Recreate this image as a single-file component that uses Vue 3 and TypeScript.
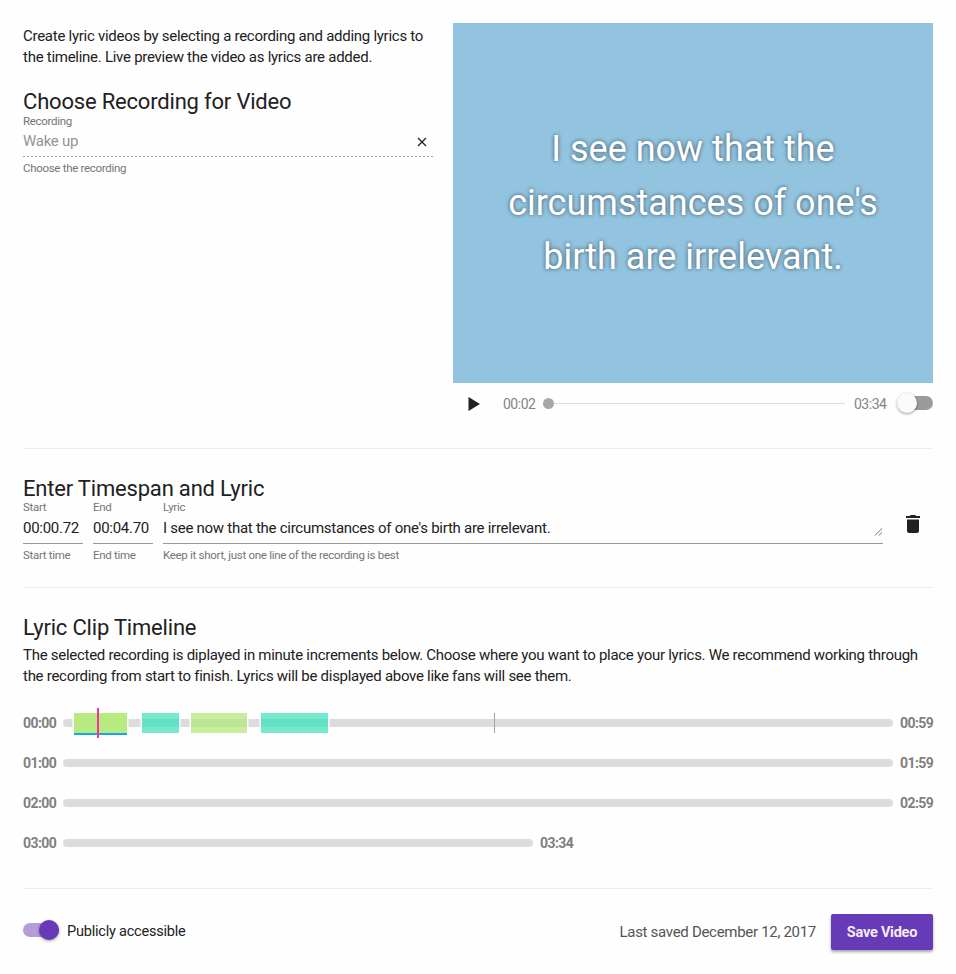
<script setup lang="ts">
interface Clip {
  start: number
  width: number
  tone: 'lime' | 'teal' | 'pale'
  active?: boolean
}

interface Minute {
  from: string
  to: string
  width: number
  clips: Clip[]
}

const lyric = "I see now that the circumstances of one's birth are irrelevant."

const minutes: Minute[] = [
  {
    from: '00:00',
    to: '00:59',
    width: 830,
    clips: [
      { start: 11, width: 53.4, tone: 'lime', active: true },
      { start: 79, width: 37.4, tone: 'teal' },
      { start: 128, width: 56.4, tone: 'pale' },
      { start: 198, width: 67.4, tone: 'teal' },
    ],
  },
  { from: '01:00', to: '01:59', width: 830, clips: [] },
  { from: '02:00', to: '02:59', width: 830, clips: [] },
  { from: '03:00', to: '03:34', width: 470, clips: [] },
]
</script>

<template>
  <main class="editor">
    <section class="top">
      <div class="intro">
        <p class="copy">
          Create lyric videos by selecting a recording and adding lyrics to the timeline. Live preview the video as
          lyrics are added.
        </p>
        <h2>Choose Recording for Video</h2>
        <div class="field">
          <label>Recording</label>
          <div class="value muted">
            <span>Wake up</span>
            <svg class="clear" viewBox="0 0 10 10" width="10" height="10">
              <path d="M1 1L9 9M9 1L1 9" />
            </svg>
          </div>
          <small>Choose the recording</small>
        </div>
      </div>
      <div class="player">
        <div class="screen"><span>{{ lyric }}</span></div>
        <div class="controls">
          <svg class="play" viewBox="0 0 12 14" width="12" height="14"><path d="M0.5 0L12 7L0.5 14Z" /></svg>
          <span class="time">00:02</span>
          <div class="seek"><i class="knob"></i><i class="rail"></i></div>
          <span class="time total">03:34</span>
          <div class="toggle"><i></i></div>
        </div>
      </div>
    </section>

    <section class="entry">
      <h2>Enter Timespan and Lyric</h2>
      <div class="fields">
        <div class="field solid short">
          <label>Start</label>
          <div class="value">00:00.72</div>
          <small>Start time</small>
        </div>
        <div class="field solid short">
          <label>End</label>
          <div class="value">00:04.70</div>
          <small>End time</small>
        </div>
        <div class="field solid wide">
          <label>Lyric</label>
          <div class="value">
            <span>{{ lyric }}</span>
            <svg class="grip" viewBox="0 0 9 8" width="9" height="8"><path d="M0.7 7.5L8 0.5M4.7 7.5L8 4.4" /></svg>
          </div>
          <small>Keep it short, just one line of the recording is best</small>
        </div>
        <svg class="trash" viewBox="0 0 14 18" width="14" height="18">
          <path d="M1 4.6H13V16Q13 18 11 18H3Q1 18 1 16ZM0 1H3.8L4.8 0H9.2L10.2 1H14V3H0Z" />
        </svg>
      </div>
    </section>

    <section class="timeline">
      <h2>Lyric Clip Timeline</h2>
      <p class="copy clipped">
        The selected recording is diplayed in minute increments below. Choose where you want to place your lyrics. We
        recommend working through the recording from start to finish. Lyrics will be displayed above like fans will see
        them.
      </p>
      <div class="rows">
        <div v-for="(minute, index) in minutes" :key="minute.from" class="row">
          <b>{{ minute.from }}</b>
          <div class="track" :style="{ width: minute.width + 'px' }">
            <i
              v-for="clip in minute.clips"
              :key="clip.start"
              class="clip"
              :class="[clip.tone, { active: clip.active }]"
              :style="{ left: clip.start + 'px', width: clip.width + 'px' }"
            ></i>
            <template v-if="index === 0">
              <i class="tick"></i>
              <i class="playhead"></i>
            </template>
          </div>
          <b>{{ minute.to }}</b>
        </div>
      </div>
    </section>

    <footer class="footer">
      <div class="toggle on"><i></i></div>
      <span class="public">Publicly accessible</span>
      <span class="saved">Last saved December 12, 2017</span>
      <button type="button">Save Video</button>
    </footer>
  </main>
</template>

<style>
body {
  background: #fefefe;
}
</style>

<style scoped>
.editor {
  box-sizing: border-box;
  width: 956px;
  height: 974px;
  padding: 23px 23px 0;
  overflow: hidden;
  font-family: Roboto, sans-serif;
  color: #212121;
  font-size: 15px;
  letter-spacing: -0.27px;
}
h2,
p {
  margin: 0;
}
h2 {
  font-size: 22px;
  line-height: 30px;
  font-weight: 400;
  letter-spacing: -0.19px;
}
.copy {
  line-height: 21px;
}
.clipped.copy {
  letter-spacing: -0.28px;
}
.top {
  display: flex;
  gap: 20px;
  height: 425px;
  border-bottom: 1px solid #ededed;
}
.intro {
  width: 410px;
  padding-top: 3px;
}
.intro h2 {
  margin-top: 19px;
}
.field label,
.field small {
  display: block;
  font-size: 11.5px;
  line-height: 14px;
  letter-spacing: -0.3px;
  color: #757575;
}
.field label {
  margin-top: -3px;
}
.field.solid label {
  margin-top: -4px;
}
.value {
  display: flex;
  align-items: center;
  justify-content: space-between;
  height: 28px;
  padding-bottom: 1px;
  margin-bottom: 4px;
  white-space: nowrap;
}
.muted {
  color: #949494;
  background: repeating-linear-gradient(90deg, #a5a5a5 0 2px, transparent 2px 4px) bottom / 100% 1px no-repeat;
}
.muted span,
.solid .value {
  line-height: 26px;
}
.muted span {
  margin-bottom: 3px;
}
.clear {
  margin: 0 6px 1px 0;
  fill: none;
  stroke: #222;
  stroke-width: 1.3;
}
.solid .value {
  border-bottom: 1px solid #999;
}
.player {
  width: 480px;
}
.screen {
  display: flex;
  align-items: center;
  justify-content: center;
  box-sizing: border-box;
  height: 360px;
  padding: 0 48px;
  background: #92c4e0;
  color: #fff;
  font-size: 36px;
  line-height: 54px;
  letter-spacing: 0;
  text-align: center;
  text-shadow: 0 0 4px rgba(0, 0, 0, 0.6);
}
.controls {
  display: flex;
  align-items: center;
  height: 41px;
}
.play {
  margin: 1px 23px 0 15px;
  fill: #212121;
}
.time {
  width: 33px;
  font-size: 14px;
  letter-spacing: -0.5px;
  color: #858585;
}
.seek {
  display: flex;
  align-items: center;
  width: 302px;
  margin: 0 9px 0 7px;
}
.knob {
  width: 11px;
  height: 11px;
  border-radius: 50%;
  background: #a5a9a9;
}
.rail {
  flex: 1;
  height: 1px;
  background: #dcdcdc;
}
.toggle {
  display: flex;
  align-items: center;
  width: 34px;
  height: 14px;
  margin: 0 0 1px 12px;
  border-radius: 7px;
  background: #9b9b9b;
}
.toggle i {
  flex: none;
  width: 20px;
  height: 20px;
  margin-left: -2px;
  border-radius: 50%;
  background: #fafafa;
  box-shadow: 0 1px 3px rgba(0, 0, 0, 0.4);
}
.toggle.on {
  justify-content: flex-end;
  width: 36px;
  margin-left: 0;
  background: #b39ddb;
}
.toggle.on i {
  background: #673ab7;
}
.entry {
  height: 138px;
  border-bottom: 1px solid #ededed;
}
.entry h2 {
  padding-top: 25px;
}
.fields {
  display: flex;
  gap: 10px;
}
.short {
  width: 60px;
}
.wide {
  width: 720px;
}
.grip {
  align-self: flex-end;
  margin-bottom: 6px;
  fill: none;
  stroke: #777;
  stroke-width: 1;
}
.trash {
  margin: 11px 0 0 13px;
  fill: #212121;
}
.timeline {
  height: 301px;
  border-bottom: 1px solid #ededed;
  box-sizing: border-box;
}
.timeline h2 {
  padding-top: 25px;
}
.clipped {
  height: 39px;
  margin-top: 2px;
  overflow: hidden;
}
.rows {
  padding-top: 19px;
}
.row {
  display: flex;
  align-items: center;
  gap: 7px;
  height: 40px;
}
.row b {
  width: 33px;
  margin-bottom: 1px;
  font-size: 14px;
  letter-spacing: -0.58px;
  color: #808080;
}
.track {
  position: relative;
  height: 8px;
  border-radius: 4px;
  background: #dcdcdc;
}
.clip {
  position: absolute;
  top: -6px;
  height: 20px;
  box-shadow: 0 0 0 1.5px #fefefe;
}
.lime {
  background: #b7eb82;
}
.teal {
  background: linear-gradient(#74e9cd 6px, #63e1c4 6px 14px, #74e9cd 14px);
}
.pale {
  background: linear-gradient(#c7ee9d 6px, #bee594 6px 14px, #c7ee9d 14px);
}
.active {
  border-bottom: 2px solid #12a5f4;
}
.tick {
  position: absolute;
  left: 431px;
  top: -6px;
  width: 1px;
  height: 20px;
  background: #a3a3a3;
}
.playhead {
  position: absolute;
  left: 34px;
  top: -11px;
  width: 2px;
  height: 30px;
  background: #f5319d;
}
.footer {
  display: flex;
  align-items: center;
  height: 83px;
}
.public {
  margin: 1px 0 0 8px;
  font-size: 14.5px;
  letter-spacing: -0.21px;
}
.saved {
  margin: 2px 15px 0 auto;
  letter-spacing: -0.3px;
  color: #555;
}
button {
  width: 102px;
  height: 36px;
  margin-top: 3px;
  padding: 0;
  border: 0;
  border-radius: 2px;
  background: #673ab7;
  color: #f2edfa;
  font: 700 14.5px Roboto, sans-serif;
  letter-spacing: -0.25px;
  box-shadow: 0 2px 3px rgba(0, 0, 0, 0.35);
}
</style>
